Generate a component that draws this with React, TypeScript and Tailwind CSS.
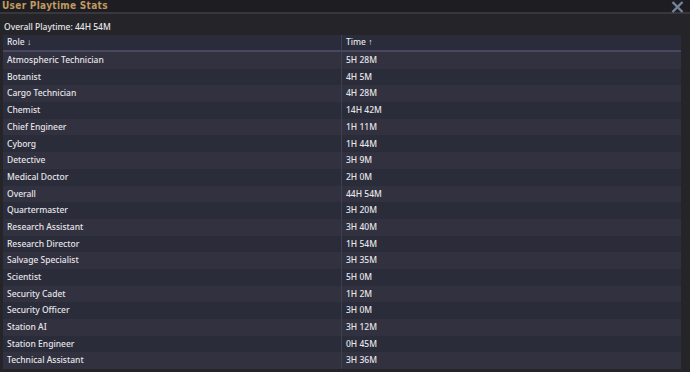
import React from "react";

const rows: [string, string][] = [
  ["Atmospheric Technician", "5H 28M"],
  ["Botanist", "4H 5M"],
  ["Cargo Technician", "4H 28M"],
  ["Chemist", "14H 42M"],
  ["Chief Engineer", "1H 11M"],
  ["Cyborg", "1H 44M"],
  ["Detective", "3H 9M"],
  ["Medical Doctor", "2H 0M"],
  ["Overall", "44H 54M"],
  ["Quartermaster", "3H 20M"],
  ["Research Assistant", "3H 40M"],
  ["Research Director", "1H 54M"],
  ["Salvage Specialist", "3H 35M"],
  ["Scientist", "5H 0M"],
  ["Security Cadet", "1H 2M"],
  ["Security Officer", "3H 0M"],
  ["Station AI", "3H 12M"],
  ["Station Engineer", "0H 45M"],
  ["Technical Assistant", "3H 36M"],
];

export default function App() {
  return (
    <div className="w-[690px] h-[372px] overflow-hidden bg-[#252429] text-[#e6e6ea] font-['Noto_Sans',sans-serif] flex flex-col">
      {/* title bar */}
      <div className="h-[14px] shrink-0 flex items-center justify-between bg-[#1e1d22] border-b-2 border-[#38373d] pl-[2px] pr-[6px]">
        <span className="text-[10px] leading-none font-bold tracking-[0.3px] text-[#c09a5e] font-['DejaVu_Sans_Condensed','DejaVu_Sans',sans-serif]">
          User Playtime Stats
        </span>
        <svg width="13" height="12" viewBox="0 0 13 12" className="mt-[1px]">
          <path d="M1.5 1L11.5 11M11.5 1L1.5 11" stroke="#75839a" strokeWidth="2.4" />
        </svg>
      </div>

      <div className="h-[21px] shrink-0 flex items-center pt-[6px] pl-[4px] text-[8.5px] font-medium leading-none">
        Overall Playtime: 44H 54M
      </div>

      {/* table */}
      <div className="ml-[3px] w-[678px] shrink-0 text-[8.5px] font-medium leading-none">
        <div className="h-[17px] flex bg-[#2a2b3b] border-b-2 border-[#47475f]">
          <div className="w-[339px] flex items-center pl-[4px] border-r border-[#3e3f56]">Role ↓</div>
          <div className="flex-1 flex items-center pl-[4px]">Time ↑</div>
        </div>
        {rows.map(([role, time], i) => (
          <div
            key={role}
            className={`h-[16.7px] flex ${i % 2 === 0 ? "bg-[#32313f]" : "bg-[#2b2c3a]"}`}
          >
            <div className="w-[339px] flex items-center pl-[4px] border-r border-[#3e3f56]">{role}</div>
            <div className="flex-1 flex items-center pl-[4px]">{time}</div>
          </div>
        ))}
      </div>
    </div>
  );
}
